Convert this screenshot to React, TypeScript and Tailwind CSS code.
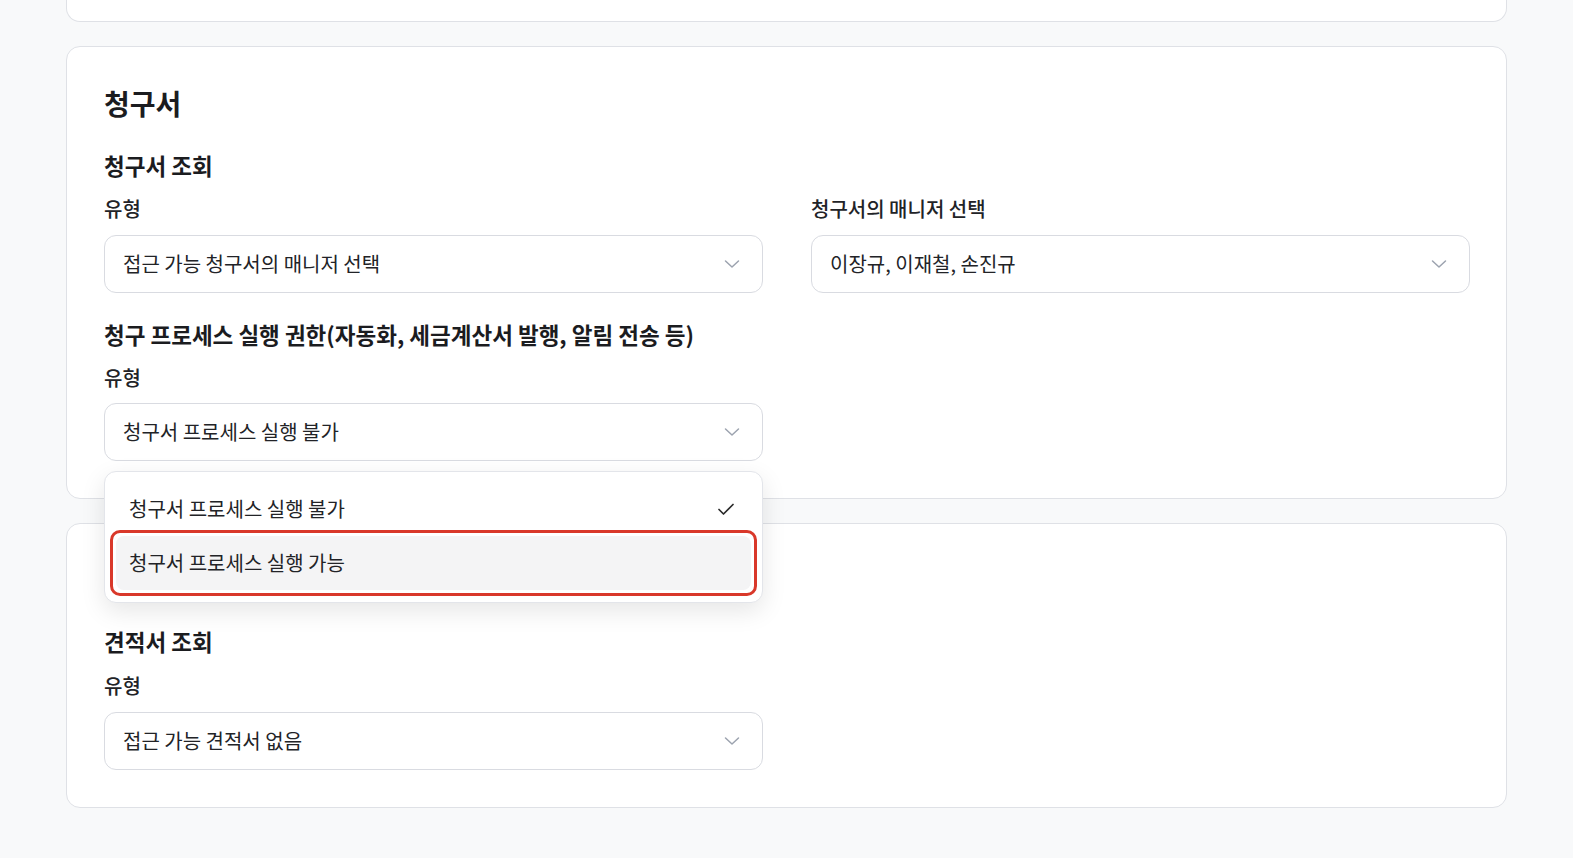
import React from "react";

function Chevron() {
  return (
    <svg width="16" height="16" viewBox="0 0 16 16" fill="none" className="shrink-0">
      <path d="M1.5 5 L8 11 L14.5 5" stroke="#9ca3af" strokeWidth="1.5" strokeLinecap="round" strokeLinejoin="round" />
    </svg>
  );
}

function Check() {
  return (
    <svg width="18" height="18" viewBox="0 0 18 18" fill="none" className="shrink-0">
      <path d="M2 9.5 L6.5 14 L16 4.5" stroke="#2a2a2a" strokeWidth="1.7" strokeLinecap="round" strokeLinejoin="round" />
    </svg>
  );
}

function Select({ value }: { value: string }) {
  return (
    <div className="h-[58px] w-full bg-white border border-[#d9dbe1] rounded-xl flex items-center justify-between pl-[18px] pr-[22px]">
      <span className="text-[20px] leading-[26px] text-[#222327]">{value}</span>
      <Chevron />
    </div>
  );
}

function Label({ children }: { children: React.ReactNode }) {
  return <div className="text-[20px] leading-[26px] font-medium text-[#222327]">{children}</div>;
}

function SubHeading({ children }: { children: React.ReactNode }) {
  return <div className="text-[22.5px] leading-[28px] font-semibold text-[#1b1c1f]">{children}</div>;
}

export default function App() {
  return (
    <div className="min-h-screen bg-[#f8f9fa] font-['Noto_Sans_CJK_KR','Noto_Sans',sans-serif]">
      <div className="px-[66px] flex flex-col gap-[24px] pb-[50px]">
        <div className="h-[22px] bg-white border border-t-0 border-[#dfe1e6] rounded-b-[14px]" />

        <div className="bg-white border border-[#dfe1e6] rounded-[14px] pl-[37px] pr-[36px] pt-[36px] pb-[37px] relative z-10">
          <h2 className="text-[28px] leading-[40px] font-semibold text-[#1b1c1f]">청구서</h2>

          <div className="mt-[28px]">
            <SubHeading>청구서 조회</SubHeading>
            <div className="grid grid-cols-2 gap-x-[48px] mt-[17px]">
              <div>
                <Label>유형</Label>
                <div className="mt-[13px]">
                  <Select value="접근 가능 청구서의 매니저 선택" />
                </div>
              </div>
              <div>
                <Label>청구서의 매니저 선택</Label>
                <div className="mt-[13px]">
                  <Select value="이장규, 이재철, 손진규" />
                </div>
              </div>
            </div>
          </div>

          <div className="mt-[27px]">
            <SubHeading>청구 프로세스 실행 권한(자동화, 세금계산서 발행, 알림 전송 등)</SubHeading>
            <div className="grid grid-cols-2 gap-x-[48px] mt-[17px]">
              <div>
                <Label>유형</Label>
                <div className="mt-[12px] relative">
                  <Select value="청구서 프로세스 실행 불가" />
                  <div className="absolute left-0 right-0 top-[calc(100%+10px)] bg-white border border-[#e3e5ea] rounded-xl shadow-[0_8px_24px_rgba(0,0,0,0.10)] px-[11px] pt-[10px] pb-[12px]">
                    <div className="h-[54px] flex items-center justify-between pl-[13px] pr-[16px] rounded-lg">
                      <span className="text-[20px] leading-[26px] text-[#222327]">청구서 프로세스 실행 불가</span>
                      <Check />
                    </div>
                    <div className="h-[54px] flex items-center justify-between pl-[13px] pr-[16px] rounded-lg bg-[#f4f4f5] relative">
                      <span className="text-[20px] leading-[26px] text-[#222327]">청구서 프로세스 실행 가능</span>
                      <div className="absolute -inset-[6px] border-[3px] border-[#d9382a] rounded-[10px] pointer-events-none" />
                    </div>
                  </div>
                </div>
              </div>
              <div />
            </div>
          </div>
        </div>

        <div className="bg-white border border-[#dfe1e6] rounded-[14px] pl-[37px] pr-[36px] pt-[36px] pb-[37px]">
          <div className="h-[40px]" />
          <div className="mt-[27px]">
            <SubHeading>견적서 조회</SubHeading>
            <div className="grid grid-cols-2 gap-x-[48px] mt-[18px]">
              <div>
                <Label>유형</Label>
                <div className="mt-[13px]">
                  <Select value="접근 가능 견적서 없음" />
                </div>
              </div>
              <div />
            </div>
          </div>
        </div>
      </div>
    </div>
  );
}
